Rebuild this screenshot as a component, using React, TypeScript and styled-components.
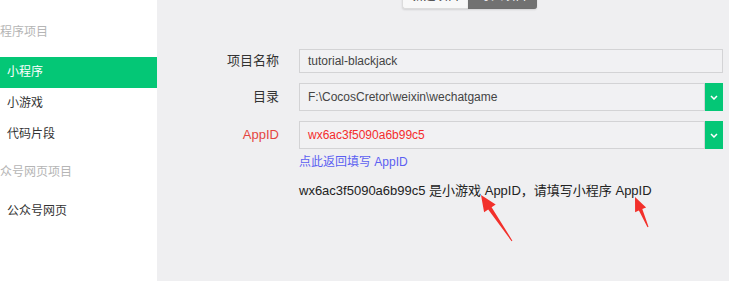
import React from "react";
import styled, { createGlobalStyle } from "styled-components";

const GlobalStyle = createGlobalStyle`
  html, body {
    margin: 0;
    padding: 0;
    background: #efeff1;
  }
  body {
    font-family: "Liberation Sans", "Noto Sans CJK SC", sans-serif;
    color: #333;
  }
`;

const Chevron = () => (
  <svg width="8" height="5" viewBox="0 0 8 5">
    <polyline points="1,1 4,4 7,1" fill="none" stroke="#fff" strokeWidth="1.5" />
  </svg>
);

type FieldProps = {
  label: string;
  value: string;
  select?: boolean;
  error?: boolean;
};

const Field = (props: FieldProps) => {
  return (
    <>
      <Label $error={props.error}>{props.label}</Label>
      <InputRow $tall={props.select}>
        <InputBox $error={props.error}>{props.value}</InputBox>
        {props.select && (
          <DropButton>
            <Chevron />
          </DropButton>
        )}
      </InputRow>
    </>
  );
};

const App = () => {
  return (
    <Page>
      <GlobalStyle />
      <Sidebar>
        <GroupTitle>小程序项目</GroupTitle>
        <NavItem $active>小程序</NavItem>
        <NavItem>小游戏</NavItem>
        <NavItem>代码片段</NavItem>
        <GroupTitle $second>公众号网页项目</GroupTitle>
        <NavItem>公众号网页</NavItem>
      </Sidebar>
      <Main>
        <Tabs>
          <Tab>新建项目</Tab>
          <Tab $active>导入项目</Tab>
        </Tabs>
        <Form>
          <Field label="项目名称" value="tutorial-blackjack" />
          <Field label="目录" value="F:\CocosCretor\weixin\wechatgame" select />
          <Field label="AppID" value="wx6ac3f5090a6b99c5" select error />
          <Spacer />
          <BackLink>点此返回填写 AppID</BackLink>
          <Spacer />
          <Message>wx6ac3f5090a6b99c5 是小游戏 AppID，请填写小程序 AppID</Message>
        </Form>
      </Main>
      <Arrows width="729" height="281" viewBox="0 0 729 281">
        <polygon points="481,195 495.7,204.4 491.6,207.2 512.4,240.7 511.6,241.3 488.2,209.4 484.1,212.2" />
        <polygon points="635,197 646.1,207.4 642.3,209.1 648.5,226.8 647.5,227.2 638.9,210.5 635.1,212.2" />
      </Arrows>
    </Page>
  );
};

const Page = styled.div`
  position: relative;
  display: flex;
  width: 729px;
  height: 281px;
  overflow: hidden;
  background: #efeff1;
`;

const Sidebar = styled.div`
  width: 157px;
  flex: none;
  background: #fff;
  padding-top: 22px;
  overflow: hidden;
  display: flex;
  flex-direction: column;
`;

const GroupTitle = styled.div<{ $second?: boolean }>`
  height: 20px;
  line-height: 20px;
  font-size: 12px;
  color: #b5b5b5;
  margin-left: -12px;
  white-space: nowrap;
  margin-top: ${(p) => (p.$second ? "12px" : "0")};
  margin-bottom: ${(p) => (p.$second ? "14px" : "15px")};
`;

const NavItem = styled.div<{ $active?: boolean }>`
  height: 31px;
  line-height: 31px;
  padding-left: 7px;
  font-size: 12px;
  color: ${(p) => (p.$active ? "#fff" : "#333")};
  background: ${(p) => (p.$active ? "#04c776" : "transparent")};
`;

const Main = styled.div`
  flex: 1;
  display: flex;
  flex-direction: column;
`;

const Tabs = styled.div`
  display: flex;
  margin-top: -17px;
  padding-left: 245px;
`;

const Tab = styled.div<{ $active?: boolean }>`
  width: ${(p) => (p.$active ? "68px" : "65px")};
  height: 24px;
  line-height: 24px;
  text-align: center;
  font-size: 12px;
  border: 1px solid ${(p) => (p.$active ? "#6f6f6f" : "#dcdcdc")};
  border-right: none;
  background: ${(p) => (p.$active ? "#717171" : "#f8f8f8")};
  color: ${(p) => (p.$active ? "#fff" : "#333")};
  border-radius: ${(p) => (p.$active ? "0 0 3px 0" : "0 0 0 3px")};
  box-shadow: 0 1px 2px rgba(0, 0, 0, 0.12);
`;

const Form = styled.div`
  display: grid;
  grid-template-columns: 80px 424px;
  column-gap: 20px;
  row-gap: 10px;
  margin-top: 40px;
  padding-left: 42px;
  align-items: center;
`;

const Label = styled.div<{ $error?: boolean }>`
  text-align: right;
  font-size: 13px;
  line-height: 18px;
  color: ${(p) => (p.$error ? "#e5453f" : "#333")};
`;

const InputRow = styled.div<{ $tall?: boolean }>`
  display: flex;
  height: ${(p) => (p.$tall ? "28px" : "24px")};
`;

const InputBox = styled.div<{ $error?: boolean }>`
  flex: 1;
  display: flex;
  align-items: center;
  padding-left: 8px;
  border: 1px solid #d3d3d5;
  background: #f1f1f3;
  font-size: 12px;
  white-space: nowrap;
  color: ${(p) => (p.$error ? "#f42c2c" : "#444")};
`;

const DropButton = styled.div`
  width: 18px;
  flex: none;
  display: flex;
  align-items: center;
  justify-content: center;
  background: #04c776;
`;

const Spacer = styled.div``;

const BackLink = styled.div`
  font-size: 12px;
  line-height: 14px;
  color: #5b60f2;
  margin-top: -4px;
  cursor: pointer;
`;

const Message = styled.div`
  font-size: 13px;
  line-height: 18px;
  color: #222;
  margin-top: 3px;
  white-space: nowrap;
`;

const Arrows = styled.svg`
  position: absolute;
  left: 0;
  top: 0;
  pointer-events: none;
  polygon {
    fill: #f2302b;
  }
`;

export default App;
